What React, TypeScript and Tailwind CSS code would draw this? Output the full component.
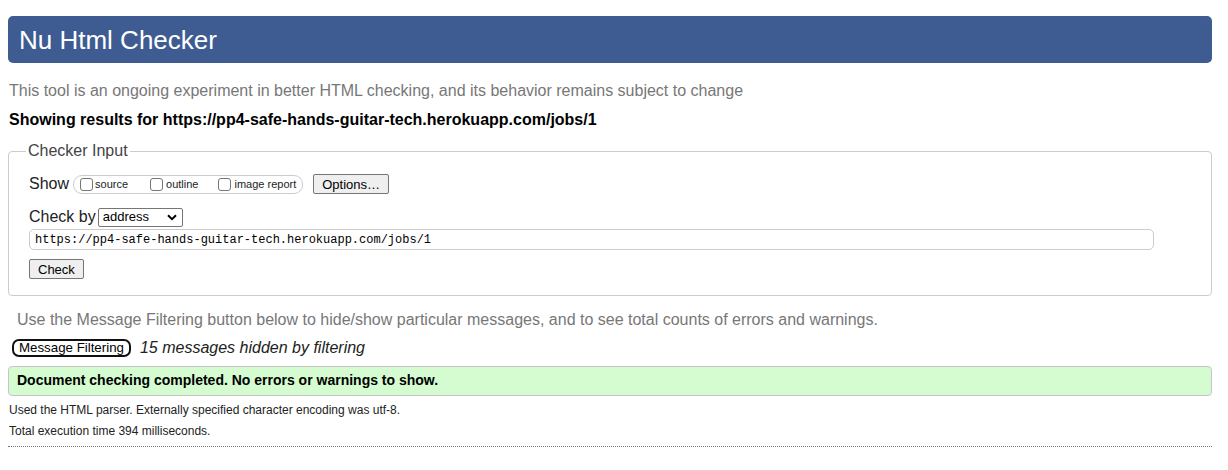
import React from "react";

function Box() {
  return <span className="w-[13px] h-[13px] border border-[#767676] rounded-[3px] bg-white shrink-0" />;
}

export default function App() {
  const sans = { fontFamily: '"Liberation Sans", Arial, sans-serif' };
  return (
    <div className="w-[1228px] h-[470px] bg-white text-black" style={sans}>
      <div className="pt-4 pl-2 pr-4">
        <div className="h-[47px] bg-[#3e5c91] rounded-[5px] flex items-center pl-[11px]">
          <h1 className="text-[26px] leading-none text-white font-normal">Nu Html Checker</h1>
        </div>
        <p className="mt-[19px] ml-[1px] text-[16px] leading-[18px] text-[#777]">
          This tool is an ongoing experiment in better HTML checking, and its behavior remains subject to change
        </p>
        <p className="mt-[11px] ml-[1px] text-[16px] leading-[18px] font-bold">
          Showing results for https://pp4-safe-hands-guitar-tech.herokuapp.com/jobs/1
        </p>
        <fieldset className="mt-[13px] border border-[#ccc] rounded-[4px] pl-[20px] pr-[57px] pb-[14px] pt-0">
          <legend className="ml-[-3px] px-[2px] text-[16px] leading-[18px] text-[#444]">Checker Input</legend>
          <div className="flex items-center mt-[14px] h-[20px]">
            <span className="text-[16px] leading-[18px] text-[#222] mr-[4px]">Show</span>
            <div className="h-[19px] border border-[#ccc] rounded-[9px] flex items-center pl-[6px] pr-[6px] text-[11px] text-[#222]">
              <label className="flex items-center mr-[22px]">
                <Box />
                <span className="ml-[2px]">source</span>
              </label>
              <label className="flex items-center mr-[20px]">
                <Box />
                <span className="ml-[3px]">outline</span>
              </label>
              <label className="flex items-center">
                <Box />
                <span className="ml-[3px]">image report</span>
              </label>
            </div>
            <button className="ml-[10px] h-[20px] px-[8px] border border-[#767676] rounded-[2px] bg-[#efefef] text-[13px] leading-none text-black">
              Options…
            </button>
          </div>
          <div className="flex items-center mt-[13px] h-[20px]">
            <span className="text-[16px] leading-[18px] text-[#222] mr-[2px]">Check by</span>
            <div className="w-[85px] h-[19px] border border-[#767676] rounded-[2px] flex items-center justify-between pl-[4px] pr-[5px] text-[13px] bg-white">
              <span>address</span>
              <svg width="10" height="7" viewBox="0 0 10 7">
                <path d="M1 1.2 L5 5.2 L9 1.2" stroke="black" strokeWidth="2" fill="none" />
              </svg>
            </div>
          </div>
          <div
            className="mt-[2px] h-[21px] border border-[#ccc] rounded-[5px] flex items-center pl-[5px] text-[12px] text-black"
            style={{ fontFamily: '"Liberation Mono", "DejaVu Sans Mono", monospace' }}
          >
            https://pp4-safe-hands-guitar-tech.herokuapp.com/jobs/1
          </div>
          <button className="mt-[9px] h-[20px] px-[8px] border border-[#767676] rounded-[2px] bg-[#efefef] text-[13px] leading-none text-black">
            Check
          </button>
        </fieldset>
        <p className="mt-[15px] ml-[9px] text-[16px] leading-[18px] text-[#777]">
          Use the Message Filtering button below to hide/show particular messages, and to see total counts of errors and warnings.
        </p>
        <div className="flex items-center mt-[9px] ml-[4px] h-[20px]">
          <button className="h-[18px] px-[5px] border-2 border-[#111] rounded-[7px] bg-white text-[13.3px] leading-none text-black">
            Message Filtering
          </button>
          <span className="ml-[9px] text-[16px] italic text-[#222]">15 messages hidden by filtering</span>
        </div>
        <div className="mt-[8px] h-[30px] bg-[#d5fcd0] border border-[#c6c6c6] rounded-[4px] flex items-center pl-[8px] text-[14px] font-bold">
          Document checking completed. No errors or warnings to show.
        </div>
        <p className="mt-[7px] ml-[1px] text-[12px] leading-[14px] text-[#222]">
          Used the HTML parser. Externally specified character encoding was utf-8.
        </p>
        <p className="mt-[7px] ml-[1px] text-[12px] leading-[14px] text-[#222]">Total execution time 394 milliseconds.</p>
        <div className="mt-[8px] border-t border-dotted border-[#777]" />
      </div>
    </div>
  );
}
